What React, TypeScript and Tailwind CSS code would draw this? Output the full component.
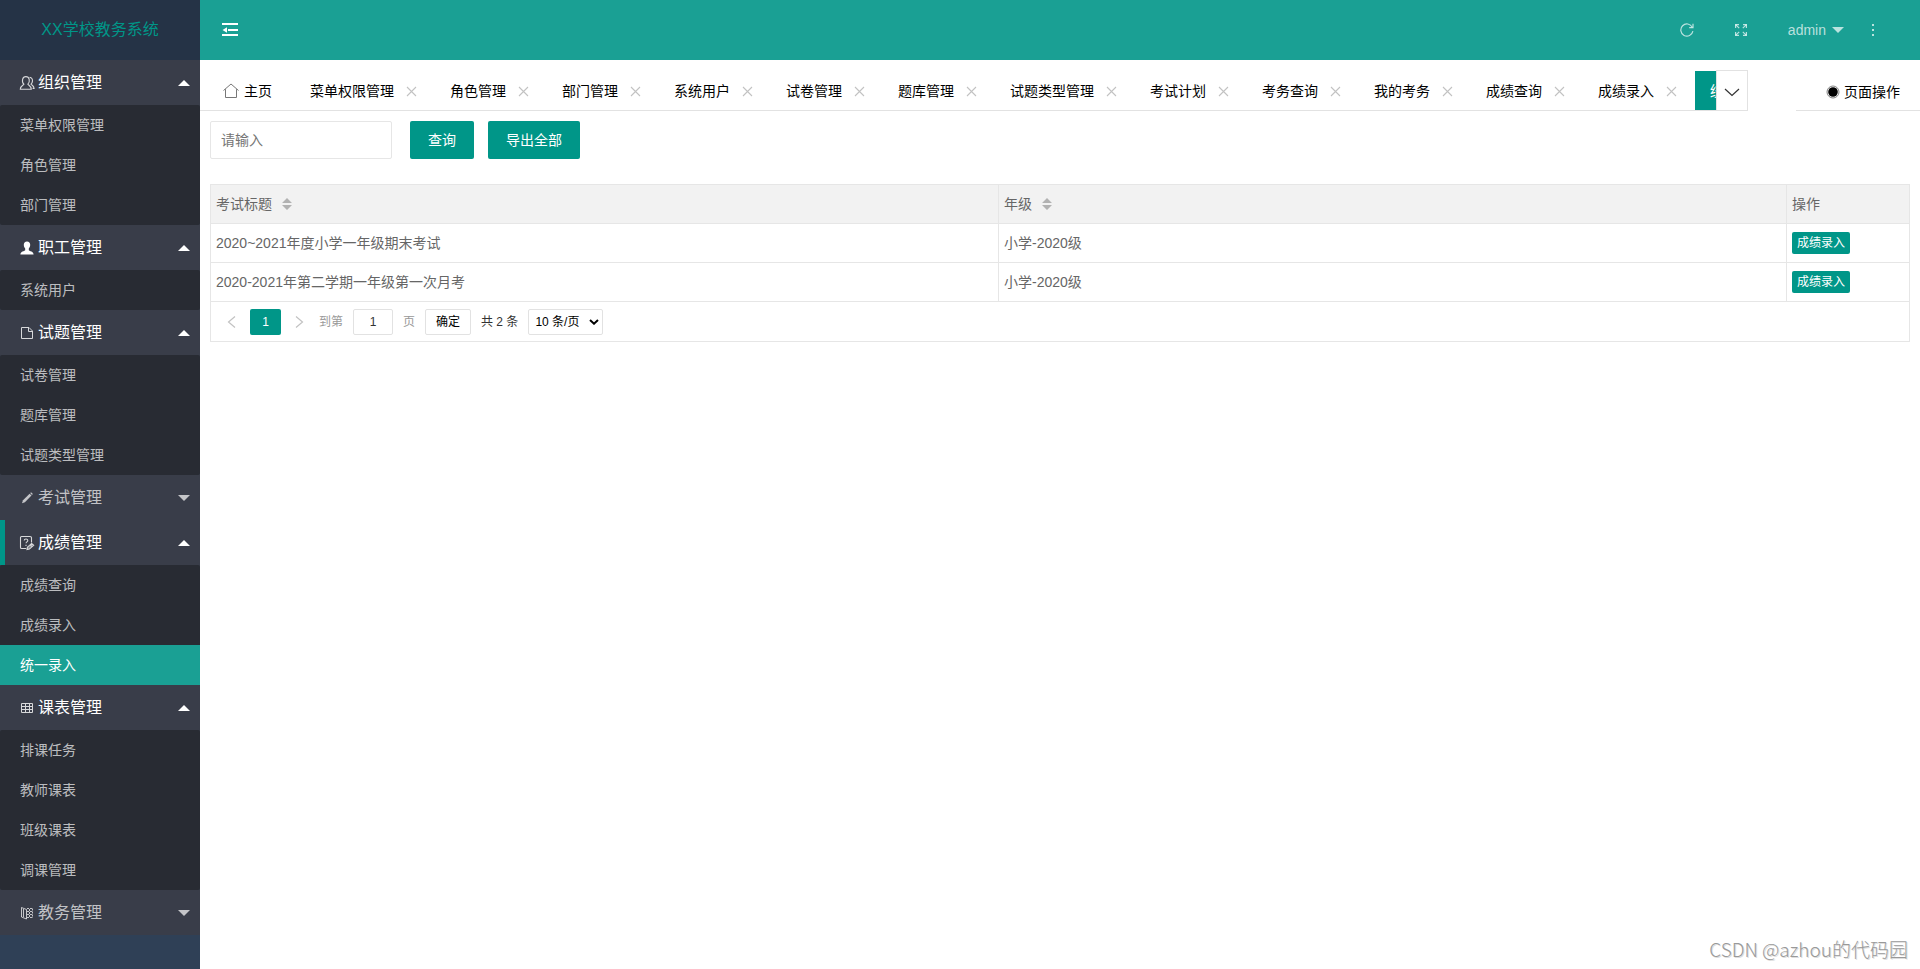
import { useState } from 'react';
import type { ReactNode } from 'react';
import { clsx } from 'clsx';

interface MenuGroup {
  title: string;
  icon: ReactNode;
  open: boolean;
  items: string[];
}

interface ExamRow {
  title: string;
  grade: string;
}

function UsersIcon() {
  return (
    <svg viewBox="0 0 16 16" className="h-4 w-4 opacity-80" fill="none" stroke="currentColor" strokeWidth="1.1">
      <path d="M4.9 9.2C3.5 8 3.2 6.2 3.6 4.3C4 2.5 5.2 1.6 6.9 1.6C8.6 1.6 9.8 2.5 10.2 4.3C10.6 6.2 10.2 8 8.9 9.2C9.4 10.4 12.3 10.9 12.3 14.2H1.3C1.3 10.9 4.4 10.4 4.9 9.2Z" />
      <path d="M10.6 2.2C12.6 2.6 13.6 4 13.5 5.9C13.4 7.4 12.8 8.5 12 9.2C12.9 10.2 15 10.6 15.1 13.4H13.6" />
    </svg>
  );
}

function UserIcon() {
  return (
    <svg viewBox="0 0 16 16" className="h-4 w-4" fill="currentColor">
      <path d="M8 1.5C10.1 1.5 11.2 2.8 11.2 4.8C11.2 6.6 10.5 7.7 9.8 8.5V10.2C10.6 11.2 14.6 11.3 14.6 14.5H1.4C1.4 11.3 5.4 11.2 6.2 10.2V8.5C5.5 7.7 4.8 6.6 4.8 4.8C4.8 2.8 5.9 1.5 8 1.5Z" />
    </svg>
  );
}

function FileIcon() {
  return (
    <svg viewBox="0 0 16 16" className="h-4 w-4 opacity-80" fill="none" stroke="currentColor" strokeWidth="1">
      <path d="M2.5 2.5H10L13.5 6V13.5H2.5Z" />
      <path d="M9.5 2.5V6.5H13.5" />
    </svg>
  );
}

function PencilIcon() {
  return (
    <svg viewBox="0 0 16 16" className="h-4 w-4" fill="currentColor">
      <path d="M3 13.2L4 10.2L10.6 3.7L12.5 5.5L5.9 12.2Z" />
      <path d="M11.2 3.1L11.8 2.6C12.5 2.1 14 3.5 13.5 4.4L13 5Z" />
    </svg>
  );
}

function ScoreIcon() {
  return (
    <svg viewBox="0 0 16 16" className="h-4 w-4 opacity-80" fill="none" stroke="currentColor" strokeWidth="1.1">
      <path d="M7.2 13.5H2.5C2 13.5 1.5 13 1.5 12.5V2.5C1.5 2 2 1.5 2.5 1.5H11C11.5 1.5 12.5 2 12.5 2.5V7.4" />
      <path d="M5.2 5.6C5.2 3.4 8.8 3.4 8.8 5.5C8.8 6.9 7 6.9 7 8.3M7 9.7V10.9" />
      <path d="M8 14.6L8.4 12.2L12.6 8.4L14.7 10.3L10.4 14.1Z" fill="currentColor" fillOpacity="0.5" />
      <path d="M11.2 9.8L13.1 11.7" />
    </svg>
  );
}

function TableIcon() {
  return (
    <svg viewBox="0 0 16 16" className="h-4 w-4 opacity-80" fill="none" stroke="currentColor" strokeWidth="1">
      <path d="M2.5 3.5H13.5V12.5H2.5ZM2.5 6.5H13.5M2.5 9.5H13.5M6.5 3.5V12.5M10.5 3.5V12.5" />
    </svg>
  );
}

function BookIcon() {
  return (
    <svg viewBox="0 0 16 16" className="h-4 w-4" fill="none" stroke="currentColor" strokeWidth="1">
      <path d="M2.5 2.5V12L7.5 14V4.5L2.5 2.5ZM4.5 4V12" />
      <path d="M8 3.5H13.5M8 12.5H13.5M8 6.5H13M8 9.5H13" strokeDasharray="2 1" />
      <path d="M10.5 4V12M13.5 3.5V13" strokeDasharray="2 1" />
    </svg>
  );
}

const menu: MenuGroup[] = [
  { title: '组织管理', icon: <UsersIcon />, open: true, items: ['菜单权限管理', '角色管理', '部门管理'] },
  { title: '职工管理', icon: <UserIcon />, open: true, items: ['系统用户'] },
  { title: '试题管理', icon: <FileIcon />, open: true, items: ['试卷管理', '题库管理', '试题类型管理'] },
  { title: '考试管理', icon: <PencilIcon />, open: false, items: ['考试计划', '考务查询', '我的考务'] },
  { title: '成绩管理', icon: <ScoreIcon />, open: true, items: ['成绩查询', '成绩录入', '统一录入'] },
  { title: '课表管理', icon: <TableIcon />, open: true, items: ['排课任务', '教师课表', '班级课表', '调课管理'] },
  { title: '教务管理', icon: <BookIcon />, open: false, items: [] },
];

const tabs = [
  '菜单权限管理', '角色管理', '部门管理', '系统用户', '试卷管理', '题库管理', '试题类型管理',
  '考试计划', '考务查询', '我的考务', '成绩查询', '成绩录入', '统一录入',
];

const rows: ExamRow[] = [
  { title: '2020~2021年度小学一年级期末考试', grade: '小学-2020级' },
  { title: '2020-2021年第二学期一年级第一次月考', grade: '小学-2020级' },
];

function Caret({ up = false }: { up?: boolean }) {
  return (
    <svg viewBox="0 0 12 6" className="h-1.5 w-3" fill="currentColor">
      <path d={up ? 'M0 6L6 0L12 6Z' : 'M0 0L6 6L12 0Z'} />
    </svg>
  );
}

function SortIcon() {
  return (
    <svg viewBox="0 0 10 12" className="h-3 w-2.5" fill="#b2b2b2">
      <path d="M0 5L5 0L10 5ZM0 7L5 12L10 7Z" />
    </svg>
  );
}

function Sidebar({ active, onSelect }: { active: string; onSelect: (name: string) => void }) {
  const [opened, setOpened] = useState(menu.map((group) => group.open));

  const toggle = (index: number) => setOpened(opened.map((value, i) => (i === index ? !value : value)));

  return (
    <aside className="w-[200px] shrink-0 bg-[#2f4056]">
      <div className="flex h-[60px] items-center justify-center bg-[#253346] text-base text-[#009688]">
        XX学校教务系统
      </div>
      <nav className="bg-[#393d49]">
        {menu.map((group, index) => {
          const isOpen = opened[index];
          return (
            <div key={group.title}>
              <button
                type="button"
                onClick={() => toggle(index)}
                className={clsx(
                  'flex h-[45px] w-full items-center border-l-[5px] pr-[10px] pl-[14px] text-base',
                  isOpen ? 'text-white' : 'text-white/70',
                  group.items.includes(active) ? 'border-[#009688]' : 'border-transparent'
                )}
              >
                {group.icon}
                <span className="ml-[3px] flex-1 text-left">{group.title}</span>
                <Caret up={isOpen} />
              </button>
              {isOpen && (
                <ul className="rounded-xs bg-[#282b33]">
                  {group.items.map((item) => (
                    <li key={item}>
                      <a
                        href="#"
                        onClick={() => onSelect(item)}
                        className={clsx(
                          'flex h-10 items-center pl-5 text-sm',
                          item === active ? 'bg-[#1aa094] text-white' : 'text-white/70'
                        )}
                      >
                        {item}
                      </a>
                    </li>
                  ))}
                </ul>
              )}
            </div>
          );
        })}
      </nav>
    </aside>
  );
}

function Header() {
  return (
    <header className="flex h-[60px] items-center bg-[#1aa094] pr-10 pl-[22px] text-sm text-white/70">
      <button type="button" aria-label="收起菜单" className="text-white">
        <svg viewBox="0 0 16 16" className="h-4 w-4" fill="currentColor">
          <path d="M0 1H16V3H0ZM6 7H16V9H6ZM0 12H16V14H0ZM0.5 8L5 5.2V10.8Z" />
        </svg>
      </button>
      <div className="ml-auto flex items-center">
        <button type="button" aria-label="刷新">
          <svg viewBox="0 0 14 14" className="h-3.5 w-3.5" fill="none" stroke="currentColor" strokeWidth="1.2">
            <path d="M12.9 8.2A6.1 6.1 0 1 1 12.3 4.2" />
            <path d="M13 0.8V4.7H9.2" />
          </svg>
        </button>
        <button type="button" aria-label="全屏" className="ml-10">
          <svg viewBox="0 0 14 14" className="h-3.5 w-3.5" fill="none" stroke="currentColor" strokeWidth="1.2">
            <path d="M1.6 5V1.6H5M9 1.6H12.4V5M12.4 9V12.4H9M5 12.4H1.6V9" />
            <path d="M1.6 1.6L5.2 5.2M12.4 1.6L8.8 5.2M12.4 12.4L8.8 8.8M1.6 12.4L5.2 8.8" />
          </svg>
        </button>
        <button type="button" className="ml-10 flex items-center gap-1.5">
          admin
          <Caret />
        </button>
        <button type="button" aria-label="更多" className="ml-[22px]">
          <svg viewBox="0 0 14 14" className="h-3.5 w-3.5" fill="currentColor">
            <path d="M6 1H8V3H6ZM6 6H8V8H6ZM6 11H8V13H6Z" />
          </svg>
        </button>
      </div>
    </header>
  );
}

function TabBar({ active, onSelect }: { active: string; onSelect: (name: string) => void }) {
  return (
    <div className="flex h-[51px] items-end text-sm text-black">
      <div className="flex h-[41px] min-w-0 flex-1 border-b border-[#e2e2e2]">
        <div className="flex min-w-0 flex-1 items-end overflow-hidden pl-2">
          <button type="button" className="mr-2 flex h-[39px] shrink-0 items-center gap-[5px] px-[15px]">
            <svg viewBox="0 0 16 16" className="h-4 w-4" fill="none" stroke="#777" strokeWidth="1">
              <path d="M0.5 7.5L8 1L15.5 7.5M2.5 6.2V14.5H13.5V6.2" />
            </svg>
            主页
          </button>
          {tabs.map((tab) => (
            <div
              key={tab}
              className={clsx(
                'flex h-[39px] shrink-0 items-center gap-2.5 px-[15px]',
                tab === active && 'bg-[#009688] text-white'
              )}
            >
              <button type="button" onClick={() => onSelect(tab)}>{tab}</button>
              <button type="button" aria-label={`关闭${tab}`} className="text-[#c2c2c2]">
                <svg viewBox="0 0 16 16" className="h-4 w-4" fill="none" stroke="currentColor" strokeWidth="1.1">
                  <path d="M3 4L12 13M12 4L3 13" />
                </svg>
              </button>
            </div>
          ))}
        </div>
        <button
          type="button"
          aria-label="更多标签"
          className="flex w-8 shrink-0 items-center justify-center border-x border-t border-[#e2e2e2] text-[#333]"
        >
          <svg viewBox="0 0 16 16" className="h-4 w-4" fill="none" stroke="currentColor" strokeWidth="1.2">
            <path d="M1 6L8 12.5L15 6" />
          </svg>
        </button>
      </div>
      <button
        type="button"
        className="ml-12 flex h-[41px] w-[124px] shrink-0 items-center justify-end gap-1 border-b border-[#e2e2e2] pt-1 pr-5"
      >
        <svg viewBox="0 0 14 14" className="h-3.5 w-3.5">
          <circle cx="7" cy="7" r="6" fill="none" stroke="#666" strokeWidth="0.8" />
          <circle cx="7" cy="7" r="4.8" fill="#000" />
        </svg>
        页面操作
      </button>
    </div>
  );
}

function Pagination() {
  return (
    <div className="flex h-10 items-center border border-t-0 border-[#e6e6e6] pl-3 text-xs text-[#333]">
      <button type="button" aria-label="上一页" className="px-1 text-[#c2c2c2]">
        <svg viewBox="0 0 10 12" className="h-3 w-2.5" fill="none" stroke="currentColor" strokeWidth="1.2">
          <path d="M8 0.5L1.5 6L8 11.5" />
        </svg>
      </button>
      <button type="button" className="ml-[9px] h-[26px] w-[31px] rounded-xs bg-[#009688] text-white">1</button>
      <button type="button" aria-label="下一页" className="ml-2.5 px-1 text-[#c2c2c2]">
        <svg viewBox="0 0 10 12" className="h-3 w-2.5" fill="none" stroke="currentColor" strokeWidth="1.2">
          <path d="M1 0.5L7.5 6L1 11.5" />
        </svg>
      </button>
      <label className="ml-2.5 flex items-center gap-2.5 text-[#999]">
        到第
        <input
          type="text"
          defaultValue="1"
          className="h-[26px] w-10 rounded-xs border border-[#e2e2e2] text-center text-[#333]"
        />
        页
      </label>
      <button type="button" className="ml-2.5 h-[26px] w-[46px] rounded-xs border border-[#e2e2e2] text-black">
        确定
      </button>
      <span className="mx-2.5">共 2 条</span>
      <div className="relative">
        <select
          aria-label="每页条数"
          className="h-[26px] w-[75px] appearance-none rounded-xs border border-[#e2e2e2] bg-white pl-1.5 text-black"
        >
          <option>10 条/页</option>
          <option>20 条/页</option>
          <option>30 条/页</option>
        </select>
        <svg
          viewBox="0 0 10 6"
          className="pointer-events-none absolute top-2.5 right-1 h-1.5 w-2.5"
          fill="none"
          stroke="#000"
          strokeWidth="2"
        >
          <path d="M1 1L5 4.7L9 1" />
        </svg>
      </div>
    </div>
  );
}

function ExamTable() {
  const cell = 'border border-[#e6e6e6] px-[5px] text-left font-normal';
  return (
    <div className="mt-[25px] text-sm text-[#666]">
      <table className="w-full table-fixed border-collapse">
        <colgroup>
          <col />
          <col />
          <col className="w-[123px]" />
        </colgroup>
        <thead>
          <tr className="h-[39px] bg-[#f2f2f2]">
            <th className={cell}>
              <span className="flex items-center gap-2.5">考试标题 <SortIcon /></span>
            </th>
            <th className={cell}>
              <span className="flex items-center gap-2.5">年级 <SortIcon /></span>
            </th>
            <th className={cell}>操作</th>
          </tr>
        </thead>
        <tbody>
          {rows.map((row) => (
            <tr key={row.title} className="h-[39px]">
              <td className={cell}>{row.title}</td>
              <td className={cell}>{row.grade}</td>
              <td className={cell}>
                <button type="button" className="block h-[22px] rounded-xs bg-[#009688] px-[5px] text-xs text-white">
                  成绩录入
                </button>
              </td>
            </tr>
          ))}
        </tbody>
      </table>
      <Pagination />
    </div>
  );
}

export default function App() {
  const [active, setActive] = useState('统一录入');

  return (
    <div className="relative flex min-h-screen bg-white font-['Liberation_Sans','Noto_Sans_CJK_SC',sans-serif]">
      <Sidebar active={active} onSelect={setActive} />
      <div className="min-w-0 flex-1">
        <Header />
        <TabBar active={active} onSelect={setActive} />
        <main className="px-2.5 pt-2.5">
          <form className="flex items-center text-sm" onSubmit={(e) => e.preventDefault()}>
            <input
              type="text"
              aria-label="考试标题"
              placeholder="请输入"
              className="h-[38px] w-[182px] rounded-xs border border-[#e6e6e6] px-2.5 placeholder:text-[#757575]"
            />
            <button type="submit" className="ml-[18px] h-[38px] rounded-xs bg-[#009688] px-[18px] text-white">
              查询
            </button>
            <button type="button" className="ml-3.5 h-[38px] rounded-xs bg-[#009688] px-[18px] text-white">
              导出全部
            </button>
          </form>
          <ExamTable />
        </main>
      </div>
      <div className="absolute right-3 bottom-1.5 font-['Noto_Sans_CJK_SC',sans-serif] text-[19px] font-light text-[#999] [text-shadow:1px_1px_0_#ddd]">
        CSDN @azhou的代码园
      </div>
    </div>
  );
}
